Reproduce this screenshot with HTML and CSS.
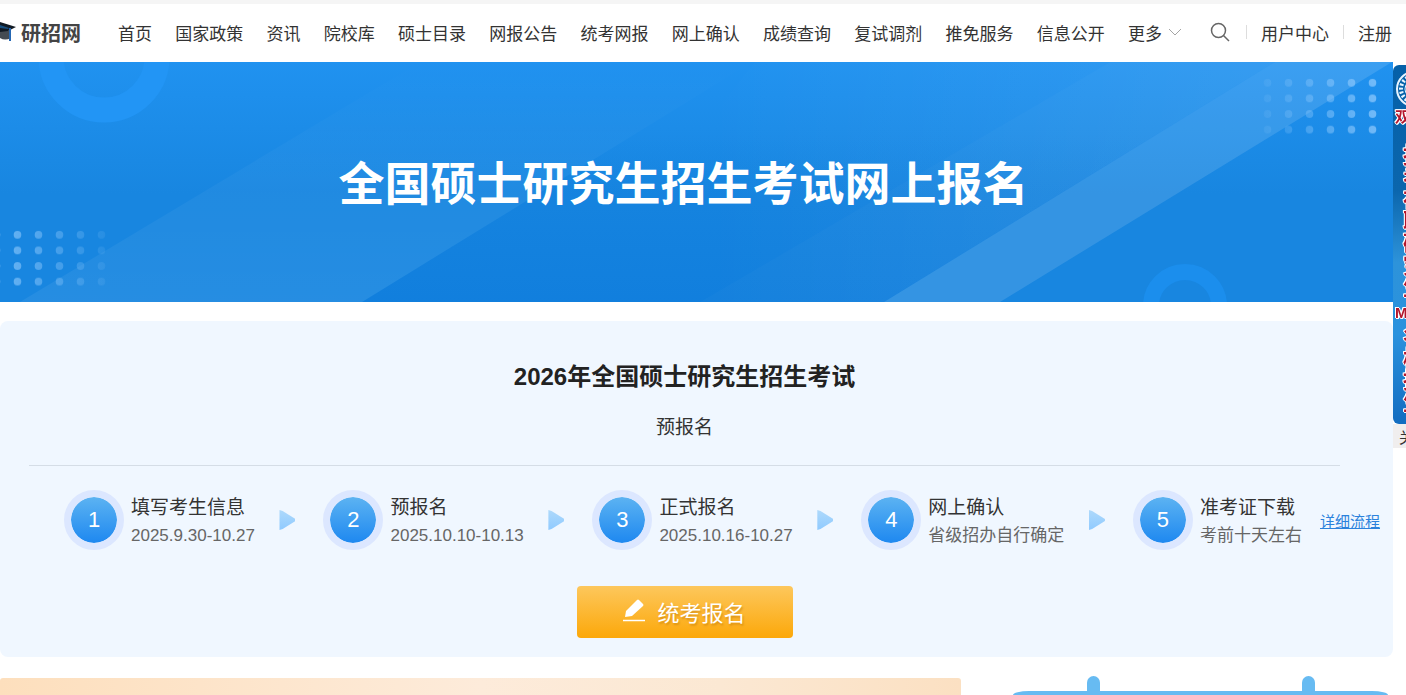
FILE: index.html
```
<!DOCTYPE html>
<html lang="zh-CN">
	<head>
		<meta charset="utf-8">
		<title>全国硕士研究生招生考试网上报名</title>
		<link rel="stylesheet" href="styles.css">
	</head>
	<body>
		<header class="header">
			<a href="#" class="logo">
				<svg width="17" height="22" viewBox="0 0 17 22">
					<path d="M0 8 L11 10 L11 17 Q5 20 0 17 Z" fill="#444b52"/>
					<path d="M0 1 L16 6 L8 10 L0 11 Z" fill="#111a24"/>
					<path d="M0 4 L9 7 L8 8 L0 7 Z" fill="#174f80"/>
					<path d="M10 7 L10 20" stroke="#2567b3" stroke-width="2"/>
				</svg>
				<span>研招网</span>
			</a>
			<nav class="nav">
				<a href="#">首页</a>
				<a href="#">国家政策</a>
				<a href="#">资讯</a>
				<a href="#">院校库</a>
				<a href="#">硕士目录</a>
				<a href="#">网报公告</a>
				<a href="#">统考网报</a>
				<a href="#">网上确认</a>
				<a href="#">成绩查询</a>
				<a href="#">复试调剂</a>
				<a href="#">推免服务</a>
				<a href="#">信息公开</a>
				<a href="#" class="more">更多
					<svg width="14" height="8" viewBox="0 0 14 8"><path d="M1 1 L7 7 L13 1" fill="none" stroke="#a5a5a5"/></svg>
				</a>
			</nav>
			<button class="search" aria-label="搜索">
				<svg width="20" height="20" viewBox="0 0 20 20"><g fill="none" stroke="#666" stroke-width="1.5"><circle cx="8.5" cy="8.5" r="7"/><path d="M13.5 13.5 L19 19"/></g></svg>
			</button>
			<div class="user">
				<a href="#">用户中心</a>
				<a href="#">注册</a>
			</div>
		</header>

		<main class="main">
			<section class="banner">
				<svg class="banner-bg" viewBox="0 0 1393 240" preserveAspectRatio="none">
					<defs>
						<linearGradient id="sky" x1="0" y1="0" x2="0" y2="1">
							<stop offset="0" stop-color="#2092f0"/>
							<stop offset=".55" stop-color="#1886e0"/>
							<stop offset="1" stop-color="#1886e0"/>
						</linearGradient>
						<linearGradient id="band" x1="0" y1="1" x2="0" y2="0">
							<stop offset="0" stop-color="#fff" stop-opacity=".06"/>
							<stop offset=".6" stop-color="#fff" stop-opacity=".03"/>
							<stop offset="1" stop-color="#fff" stop-opacity="0"/>
						</linearGradient>
						<linearGradient id="glow" x1="0" y1="0" x2="1" y2="0">
							<stop offset=".2" stop-color="#fff" stop-opacity="0"/>
							<stop offset="1" stop-color="#fff" stop-opacity=".08"/>
						</linearGradient>
						<linearGradient id="shade" x1="0" y1="0" x2="0" y2="1">
							<stop offset=".3" stop-color="#0876da" stop-opacity="0"/>
							<stop offset="1" stop-color="#0876da" stop-opacity=".45"/>
						</linearGradient>
						<linearGradient id="fadeRight">
							<stop offset="0" stop-color="#9cd0ff" stop-opacity=".08"/>
							<stop offset="1" stop-color="#9cd0ff" stop-opacity=".7"/>
						</linearGradient>
						<linearGradient id="fadeLeft">
							<stop offset="0" stop-color="#9cd0ff" stop-opacity=".7"/>
							<stop offset="1" stop-color="#9cd0ff" stop-opacity=".08"/>
						</linearGradient>
						<pattern id="dots" width="21" height="15.6" patternUnits="userSpaceOnUse">
							<circle cx="10.5" cy="7.8" r="3.8" fill="#fff"/>
						</pattern>
						<mask id="dotsMask"><rect width="126" height="62.4" fill="url(#dots)"/></mask>
					</defs>
					<rect width="1393" height="240" fill="url(#sky)"/>
					<path d="M362 240 L752 0 H1275 L884 240 Z" fill="url(#shade)"/>
					<path d="M20 240 L420 0 H752 L362 240 Z" fill="url(#band)"/>
					<path d="M564 240 L755 0 H1275 L884 240 Z" fill="url(#glow)"/>
					<path d="M700 240 L1110 0 H1275 L884 240 Z" fill="#fff" fill-opacity=".02"/>
					<path d="M884 240 L1275 0 H1392 L1000 240 Z" fill="#fff" fill-opacity=".12"/>
					<circle cx="104" cy="-5" r="53" fill="none" stroke="#2295f5" stroke-width="25"/>
					<circle cx="1185" cy="244" r="34" fill="none" stroke="#1b8eed" stroke-width="16"/>
					<g transform="translate(1257 13)"><rect width="126" height="62" fill="url(#fadeRight)" mask="url(#dotsMask)"/></g>
					<g transform="translate(-14 165)"><rect width="126" height="62" fill="url(#fadeLeft)" mask="url(#dotsMask)"/></g>
				</svg>
				<h1>全国硕士研究生招生考试网上报名</h1>
			</section>

			<section class="signup">
				<h2>2026年全国硕士研究生招生考试</h2>
				<p class="stage">预报名</p>
				<div class="flow">
					<ol class="steps">
						<li><i>1</i><div><h3>填写考生信息</h3><p>2025.9.30-10.27</p></div></li>
						<li><i>2</i><div><h3>预报名</h3><p>2025.10.10-10.13</p></div></li>
						<li><i>3</i><div><h3>正式报名</h3><p>2025.10.16-10.27</p></div></li>
						<li><i>4</i><div><h3>网上确认</h3><p>省级招办自行确定</p></div></li>
						<li><i>5</i><div><h3>准考证下载</h3><p>考前十天左右</p></div></li>
					</ol>
					<a href="#" class="detail">详细流程</a>
				</div>
				<button class="apply">
					<svg width="22" height="24" viewBox="0 0 22 24"><path d="M2 18 L3 12 L14 1 Q15 0 16 1 L20 5 Q21 6 20 7 L9 17 Z" fill="#fff"/><path d="M0 21.5 H22" stroke="#fff" stroke-width="1.5"/></svg>
					<span>统考报名</span>
				</button>
			</section>

			<div class="bottom">
				<div class="notice"></div>
				<div class="calendar">
					<div class="rings"><span></span><span></span></div>
					<div class="sheet"></div>
				</div>
			</div>
		</main>

		<aside class="side">
			<div class="ad">
				<svg width="40" height="40" viewBox="0 0 40 40"><g fill="none" stroke="#e6f4ff"><circle cx="20" cy="20" r="17" stroke-width="2"/><circle cx="20" cy="20" r="13" stroke-width="4" stroke-dasharray="2 2"/><circle cx="20" cy="20" r="9"/></g></svg>
				<b class="tag">双证</b>
				<b class="column">报考在职研究生</b>
				<b class="tag">MBA</b>
				<b class="column last">名校招生</b>
			</div>
			<button class="close">关闭</button>
		</aside>
	</body>
</html>
```
FILE: styles.css
```
* {
	box-sizing: border-box;
	margin: 0;
	padding: 0;
}
body {
	display: flex;
	flex-direction: column;
	min-height: 100vh;
	background: #fff;
	color: #333;
	font-family: "Liberation Sans", "Noto Sans CJK SC", sans-serif;
	font-size: 17px;
}
a {
	color: inherit;
	text-decoration: none;
}
button {
	border: 0;
	background: none;
	font-family: inherit;
	cursor: pointer;
}

/* header */
.header {
	display: flex;
	align-items: center;
	height: 62px;
	padding: 0 14px 2px 0;
	border-top: 4px solid #f5f5f5;
	white-space: nowrap;
}
.logo {
	display: flex;
	align-items: center;
	gap: 4px;
	margin-right: 37px;
	color: #444;
	font-size: 20px;
	font-weight: bold;
}
.nav {
	display: flex;
	flex: 1;
	justify-content: space-between;
}
.more {
	display: flex;
	align-items: center;
	gap: 6px;
}
.search {
	display: flex;
	margin: 0 16px 0 28px;
}
.user {
	display: flex;
}
.user a {
	padding-left: 15px;
	background: linear-gradient(#ddd, #ddd) left center / 1px 14px no-repeat;
}
.user a + a {
	margin-left: 14px;
}

/* banner */
.main {
	display: flex;
	flex: 1;
	flex-direction: column;
	padding-right: 13px;
}
.banner {
	position: relative;
	display: flex;
	align-items: center;
	justify-content: center;
	height: 240px;
	padding: 3px 26px 0 0;
}
.banner-bg {
	position: absolute;
	top: 0;
	left: 0;
	width: 100%;
	height: 100%;
}
.banner h1 {
	position: relative;
	color: #fff;
	font-size: 46px;
	line-height: 60px;
}

/* sign up */
.signup {
	display: flex;
	flex-direction: column;
	align-items: center;
	margin-top: 19px;
	padding: 36px 0 19px;
	border-radius: 8px;
	background: #f0f7ff;
}
.signup h2 {
	margin-right: 24px;
	color: #222;
	font-size: 24px;
	line-height: 40px;
}
.stage {
	margin: 15px 24px 21px 0;
	font-size: 19px;
	line-height: 32px;
}
.flow {
	display: flex;
	align-items: center;
	align-self: stretch;
	gap: 18px;
	padding: 25px 13px 36px 64px;
	background: linear-gradient(#d5dde6, #d5dde6) 29px 0 / calc(100% - 82px) 1px no-repeat;
	white-space: nowrap;
}
.steps {
	display: flex;
	flex: 1;
	align-items: center;
	justify-content: space-between;
	list-style: none;
}
.steps li {
	display: flex;
	align-items: center;
	gap: 7px;
}
.steps li + li:before {
	content: "";
	width: 16px;
	height: 20px;
	margin-right: 21px;
	background: linear-gradient(#aed9fb, #8fcaff);
	clip-path: polygon(0 0, 20% 5%, 100% 45%, 100% 55%, 20% 95%, 0 100%);
}
.steps i {
	width: 60px;
	height: 60px;
	border: 7px solid #dce7ff;
	border-radius: 50%;
	background: linear-gradient(#5cb3f2, #1e88f0) padding-box;
	color: #fff;
	font-size: 22px;
	font-style: normal;
	line-height: 46px;
	text-align: center;
}
.steps div {
	padding-top: 3px;
}
.steps h3 {
	font-size: 19px;
	font-weight: normal;
	line-height: 28px;
}
.steps p {
	color: #666;
	line-height: 28px;
}
.detail {
	color: #2b82dc;
	font-size: 15px;
	text-decoration: underline;
}
.apply {
	display: flex;
	align-items: center;
	justify-content: center;
	gap: 12px;
	width: 216px;
	height: 52px;
	padding-bottom: 3px;
	margin-right: 24px;
	border-radius: 4px;
	background: linear-gradient(#fdc75c, #fca80a);
	color: #fff;
	font-size: 22px;
	text-shadow: 1px 2px 2px rgba(170, 100, 0, .4);
}

/* bottom */
.bottom {
	display: flex;
	flex: 1;
	justify-content: space-between;
	padding-right: 5px;
}
.notice {
	flex: 1;
	margin: 21px 52px 0 0;
	border-radius: 3px 3px 0 0;
	background: linear-gradient(90deg, #fddfbd, #fdebda 50%, #fbe8d3 75%, #fbe0c2);
}
.calendar {
	display: flex;
	flex-direction: column;
	width: 27%;
	padding-top: 19px;
}
.rings {
	display: flex;
	justify-content: space-between;
	padding: 0 73px 0 74px;
}
.rings span {
	width: 13px;
	height: 15px;
	border-radius: 7px 7px 0 0;
	background: #67bbf2;
}
.sheet {
	flex: 1;
	border-radius: 20px 20px 0 0 / 5px 5px 0 0;
	background: #67bbf2;
}

/* floating ad, most of it runs past the window edge */
.side {
	position: fixed;
	top: 65px;
	right: 0;
	width: 13px;
	overflow: hidden;
	white-space: nowrap;
}
.ad {
	display: flex;
	flex-direction: column;
	height: 359px;
	border-radius: 6px 0 0 6px;
	background: linear-gradient(#0560a8, #0b66ad 35%, #2d93da 55%, #2a92de 75%, #126cc0);
	color: #b3152b;
	overflow: hidden;
}
.ad svg {
	flex: none;
	margin: 4px 0 0 1px;
}
.ad b {
	text-shadow: 1px 0 #fff, -1px 0 #fff, 0 1px #fff, 0 -1px #fff, 1px 1px #fff, -1px -1px #fff;
}
.tag {
	padding-left: 2px;
	font-size: 15px;
	line-height: 16px;
}
.column {
	width: 22px;
	height: 158px;
	margin: 19px 0 3px 7px;
	font-size: 22px;
	line-height: 22px;
	writing-mode: vertical-rl;
}
.ad .last {
	height: 92px;
	margin: 4px 0 0 7px;
}
.close {
	width: 60px;
	height: 24px;
	padding-left: 6px;
	background: #f0eeee;
	color: #333;
	font-size: 15px;
	text-align: left;
}
```
